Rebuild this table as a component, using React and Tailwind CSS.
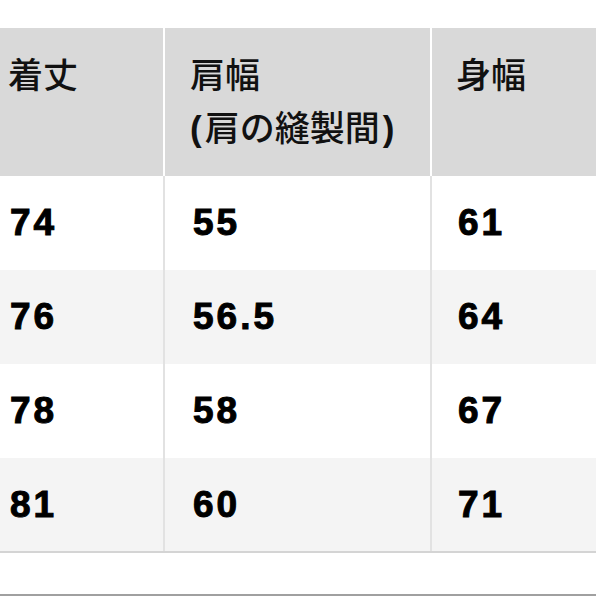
const rows = [
  ["74", "55", "61"],
  ["76", "56.5", "64"],
  ["78", "58", "67"],
  ["81", "60", "71"],
];

const jp = { fontFamily: '"Noto Sans CJK JP", "Noto Sans", sans-serif' };
const paren = { fontFamily: '"Liberation Sans", sans-serif' };

export default function App() {
  return (
    <div className="w-[596px] h-[596px] bg-white overflow-hidden flex flex-col">
      <div className="h-[28px] shrink-0" />
      <table className="w-[700px] border-collapse table-fixed">
        <colgroup>
          <col className="w-[164px]" />
          <col className="w-[267px]" />
          <col />
        </colgroup>
        <thead>
          <tr className="bg-[#d9d9d9] h-[148px] text-[#111]" style={jp}>
            <th className="align-top text-left font-medium text-[35px] leading-[53px] pl-[8px] pt-[18px] border-r-2 border-white">
              着丈
            </th>
            <th className="align-top text-left font-medium text-[35px] leading-[53px] pl-[25px] pt-[18px] border-r-2 border-white">
              肩幅
              <br />
              <span className="font-bold pr-[3px]" style={paren}>(</span>
              肩の縫製間
              <span className="font-bold pl-[3px]" style={paren}>)</span>
            </th>
            <th className="align-top text-left font-medium text-[35px] leading-[53px] pl-[24px] pt-[18px]">
              身幅
            </th>
          </tr>
        </thead>
        <tbody style={{ fontFamily: '"Liberation Sans", Arial, sans-serif' }}>
          {rows.map((r, i) => (
            <tr
              key={i}
              className={
                (i % 2 ? "bg-[#f4f4f4]" : "bg-white") +
                " h-[94px] text-black font-bold text-[37px] tracking-[3px] [-webkit-text-stroke:1px_black]"
              }
            >
              <td className={"pl-[10px] border-r-2 border-[#e2e2e2]" + (i === 3 ? " border-b-2 border-b-[#d4d4d4]" : "")}>
                {r[0]}
              </td>
              <td className={"pl-[28px] border-r-2 border-[#e2e2e2]" + (i === 3 ? " border-b-2 border-b-[#d4d4d4]" : "")}>
                {r[1]}
              </td>
              <td className={"pl-[26px]" + (i === 3 ? " border-b-2 border-b-[#d4d4d4]" : "")}>{r[2]}</td>
            </tr>
          ))}
        </tbody>
      </table>
      <div className="flex-1" />
      <div className="h-[2px] bg-[#a0a0a0] shrink-0" />
    </div>
  );
}
